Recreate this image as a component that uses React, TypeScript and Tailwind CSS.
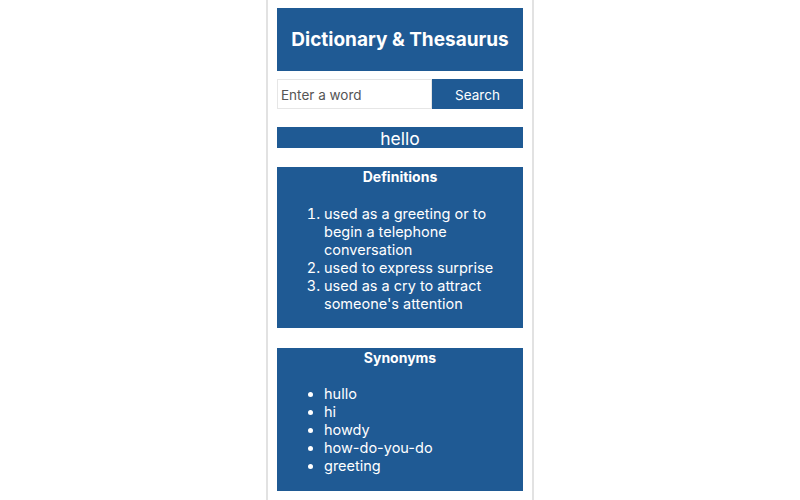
const definitions = [
  "used as a greeting or to begin a telephone conversation",
  "used to express surprise",
  "used as a cry to attract someone's attention",
];

const synonyms = ["hullo", "hi", "howdy", "how-do-you-do", "greeting"];

export default function App() {
  return (
    <div
      className="flex h-[500px] w-full justify-center bg-white"
      style={{ fontFamily: 'Inter, "Liberation Sans", Arial, sans-serif' }}
    >
      <div className="flex h-full w-[268px] flex-col border-x-2 border-[#e2e2e2] px-[9px] pt-[8px]">
        <div className="flex h-[63px] items-center justify-center bg-[#1f5a94] pt-[2px]">
          <h1 className="text-[19px] font-bold text-white">Dictionary &amp; Thesaurus</h1>
        </div>

        <div className="mt-[8px] flex h-[30px]">
          <input
            className="w-[155px] border border-[#e6e6e6] px-[3px] pt-[2px] text-[13.5px] text-[#333] outline-none placeholder:text-[#555]"
            placeholder="Enter a word"
          />
          <button className="flex-1 bg-[#1f5a94] pt-[2px] text-[13.5px] text-white">Search</button>
        </div>

        <div className="mt-[18px] flex h-[21px] items-center justify-center bg-[#1f5a94] pt-[3px]">
          <span className="text-[17.5px] leading-none text-white">hello</span>
        </div>

        <div className="mt-[19px] h-[161px] bg-[#1f5a94] pt-[1px] text-white">
          <h3 className="text-center text-[14px] font-bold leading-[18px]">Definitions</h3>
          <ol className="mt-[19px] list-decimal pl-[47px] pr-[22px] text-[14.5px] leading-[18px]">
            {definitions.map((d) => (
              <li key={d}>{d}</li>
            ))}
          </ol>
        </div>

        <div className="mt-[20px] h-[143px] bg-[#1f5a94] pt-[1px] text-white">
          <h3 className="text-center text-[14px] font-bold leading-[18px]">Synonyms</h3>
          <ul className="mt-[18px] list-disc pl-[47px] text-[14.5px] leading-[18px]">
            {synonyms.map((s) => (
              <li key={s}>{s}</li>
            ))}
          </ul>
        </div>
      </div>
    </div>
  );
}
